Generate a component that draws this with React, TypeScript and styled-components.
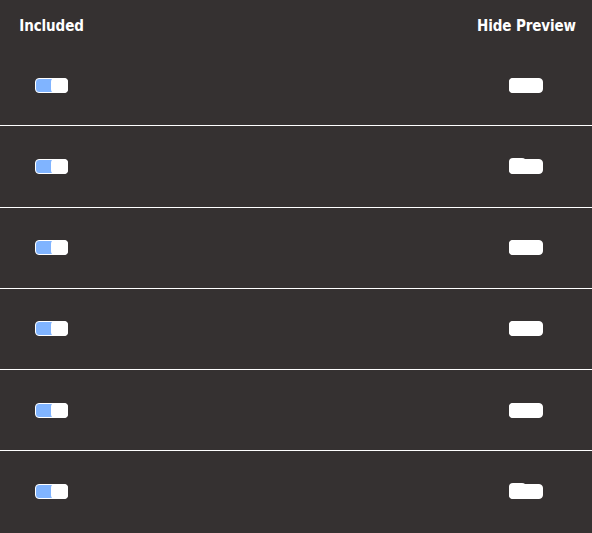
import { FC } from "react";
import styled, { createGlobalStyle } from "styled-components";

const GlobalStyle = createGlobalStyle`
    html, body {
        margin: 0;
        padding: 0;
        background-color: #353131;
    }
    * {
        box-sizing: border-box;
    }
`;

const Table = styled.div`
    width: 592px;
    height: 533px;
    background-color: #353131;
    font-family: "DejaVu Sans Condensed", "DejaVu Sans", Verdana, sans-serif;
    color: #ffffff;
`;

const HeaderRow = styled.div`
    display: grid;
    grid-template-columns: 67px 1fr 98px;
    align-items: center;
    height: 45px;
    padding: 6px 17px 0 18px;
`;

const HeaderCell = styled.div`
    font-size: 15px;
    font-weight: 700;
    text-align: center;
    white-space: nowrap;
    letter-spacing: -0.1px;
`;

const Row = styled.div<{ last?: boolean }>`
    display: grid;
    grid-template-columns: 67px 1fr 98px;
    align-items: center;
    height: 81.25px;
    padding: 0 17px 0 18px;
    border-bottom: ${props => props.last ? "none" : "1px solid #ffffff"};
`;

const Cell = styled.div`
    display: flex;
    justify-content: center;
`;

type SwitchProps = {
    on: boolean
    raised?: boolean
}

const Track = styled.div<SwitchProps>`
    position: relative;
    width: ${props => props.on ? "33px" : "34px"};
    height: 15px;
    border-radius: 4px;
    border: 1px solid #ffffff;
    background-color: ${props => props.on ? "#80b4ff" : "#ffffff"};
`;

const Knob = styled.div<SwitchProps>`
    position: absolute;
    top: ${props => props.raised ? "-2px" : "-1px"};
    left: ${props => props.on ? "15px" : "-1px"};
    width: 17px;
    height: ${props => props.raised ? "16px" : "15px"};
    border-radius: 4px;
    background-color: #ffffff;
`;

const Switch: FC<SwitchProps> = ({ on, raised }) => (
    <Track on={on}>
        <Knob on={on} raised={raised} />
    </Track>
);

const rows = [
    { included: true, hidden: false, raised: false },
    { included: true, hidden: false, raised: true },
    { included: true, hidden: false, raised: false },
    { included: true, hidden: false, raised: false },
    { included: true, hidden: false, raised: false },
    { included: true, hidden: false, raised: true },
];

const App: FC = () => {
    return (
        <>
            <GlobalStyle />
            <Table>
                <HeaderRow>
                    <HeaderCell>Included</HeaderCell>
                    <div />
                    <HeaderCell>Hide Preview</HeaderCell>
                </HeaderRow>
                {rows.map((row, i) => (
                    <Row key={i} last={i === rows.length - 1}>
                        <Cell>
                            <Switch on={row.included} />
                        </Cell>
                        <div />
                        <Cell>
                            <Switch on={row.hidden} raised={row.raised} />
                        </Cell>
                    </Row>
                ))}
            </Table>
        </>
    )
}

export default App;
